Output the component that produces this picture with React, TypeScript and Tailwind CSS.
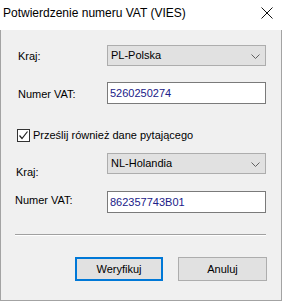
import React from 'react';

const font = { fontFamily: '"Liberation Sans", Arial, sans-serif' };

const Chevron = () => (
  <svg width="9" height="5" viewBox="0 0 9 5" className="absolute right-[5px] top-[8px]">
    <path d="M0.5 0.5 L4.5 4.5 L8.5 0.5" fill="none" stroke="#606060" strokeWidth="1" />
  </svg>
);

const Select = ({ value }: { value: string }) => (
  <div className="relative w-[159px] h-[21px] bg-[#e1e1e1] border border-[#adadad] pl-[3px] text-[11px] leading-[19px] text-black">
    {value}
    <Chevron />
  </div>
);

const Input = ({ value }: { value: string }) => (
  <div className="w-[159px] h-[22px] bg-white border border-[#7a7a7a] pl-[2px] text-[11px] leading-[20px] text-[#202088]">
    {value}
  </div>
);

export default function App() {
  return (
    <div className="w-[282px] h-[301px] bg-[#f0f0f0] border-x border-b border-[#a3a3a3] flex flex-col text-black" style={font}>
      <div className="h-[30px] bg-white flex items-center justify-between pl-[3px] pr-[9px] -mx-px">
        <span className="text-[12px] mt-[-4px]" style={font}>
          Potwierdzenie numeru VAT (VIES)
        </span>
        <svg width="12" height="12" viewBox="0 0 12 12" className="mt-[-4px]">
          <path d="M0.5 0.5 L11.5 11.5 M11.5 0.5 L0.5 11.5" stroke="#111" strokeWidth="1" />
        </svg>
      </div>

      <div className="flex flex-col text-[11px]">
        <div className="flex mt-[15px] h-[21px]">
          <span className="w-[106px] pl-[17px] pt-[3px]">Kraj:</span>
          <Select value="PL-Polska" />
        </div>
        <div className="flex mt-[16px] h-[22px]">
          <span className="w-[106px] pl-[17px] pt-[4px]">Numer VAT:</span>
          <Input value="5260250274" />
        </div>

        <label className="flex items-center mt-[25px] ml-[16px] h-[13px] gap-[3px]">
          <span className="w-[13px] h-[13px] border border-[#333] bg-white flex items-center justify-center">
            <svg width="11" height="11" viewBox="0 0 11 11">
              <path d="M1.5 5.5 L4 8.5 L9.5 1.5" fill="none" stroke="#222" strokeWidth="1.2" />
            </svg>
          </span>
          <span>Prześlij również dane pytającego</span>
        </label>

        <div className="flex mt-[11px] h-[21px]">
          <span className="w-[106px] pl-[15px] pt-[11px]">Kraj:</span>
          <Select value="NL-Holandia" />
        </div>
        <div className="flex mt-[17px] h-[22px]">
          <span className="w-[106px] pl-[14px] pt-[1px]">Numer VAT:</span>
          <Input value="862357743B01" />
        </div>

        <div className="mt-[21px] mx-[14px] h-[2px] border-t border-[#a0a0a0] border-b border-b-white w-[251px]" />

        <div className="flex mt-[21px] ml-[74px] gap-[15px]">
          <button className="w-[88px] h-[24px] bg-[#e1e1e1] border-2 border-[#0078d7] text-[11px]" style={font}>
            Weryfikuj
          </button>
          <button className="w-[89px] h-[24px] bg-[#e1e1e1] border border-[#adadad] text-[11px]" style={font}>
            Anuluj
          </button>
        </div>
      </div>
    </div>
  );
}
